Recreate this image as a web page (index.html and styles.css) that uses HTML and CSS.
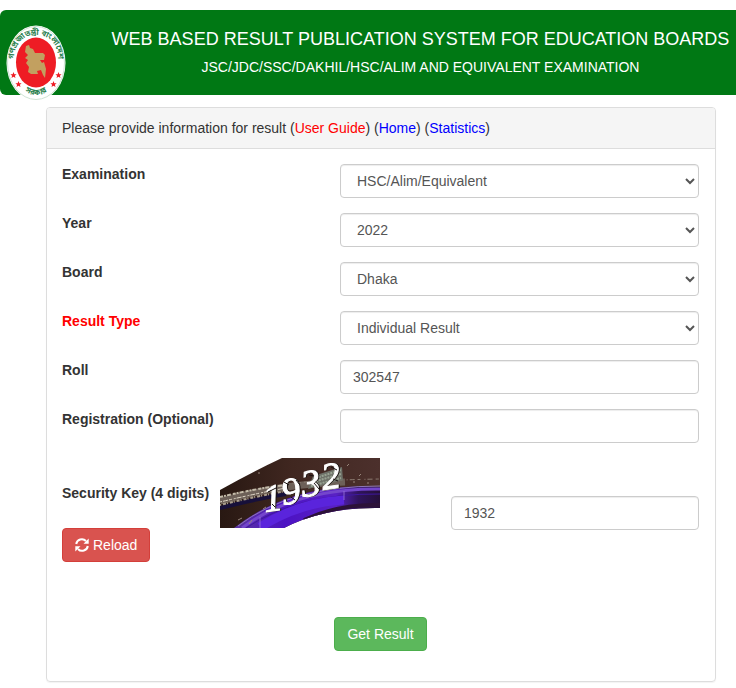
FILE: index.html
```html
<!DOCTYPE html>
<html lang="en">
<head>
    <meta charset="UTF-8">
    <meta name="viewport" content="width=device-width, initial-scale=1.0">
    <title>Web Based Result Publication System for Education Boards</title>
    <link rel="stylesheet" href="styles.css">
</head>
<body>
    <header class="banner">
        <svg class="logo" viewBox="0 0 60 76" role="img" aria-label="Government seal">
            <defs>
                <path id="sealTop" d="M9 45 C4 21 16 10 30 10 C44 10 56 21 51 45"/>
                <path id="sealBottom" d="M12 60 Q30 80 48 60"/>
            </defs>
            <ellipse cx="30" cy="38" rx="29.500" ry="37.500" fill="#fff"/>
            <ellipse cx="30" cy="38" rx="28.500" ry="36.500" fill="none" stroke="#cfe3d4" stroke-width="1"/>
            <ellipse cx="30" cy="37.500" rx="20" ry="25" fill="#ee1c24"/>
            <path d="M20 21 L23 20 L24 23 L27 24 L29 28 L37 28 L39 30 L38 35 L34 35 L36 38 L38 37 L40 44 L39 53 L37 50 L35 45 L31 46 L32 49 L25 49 L22 47 L23 42 L20 38 L22 35 L19 33 L22 30 L19 27 Z" fill="#c2a060"/>
            <g class="seal-text">
                <text text-anchor="middle"><textPath href="#sealTop" startOffset="50%">গণপ্রজাতন্ত্রী বাংলাদেশ</textPath></text>
                <text text-anchor="middle"><textPath href="#sealBottom" startOffset="50%">সরকার</textPath></text>
            </g>
            <g fill="#ee1c24">
                <path id="star" d="M7.500 47 L8.400 49.200 L10.600 49.300 L8.900 50.700 L9.500 53 L7.500 51.700 L5.500 53 L6.100 50.700 L4.400 49.300 L6.600 49.200 Z"/>
                <use href="#star" x="5" y="9"/>
                <use href="#star" x="40" y="9"/>
                <use href="#star" x="45" y="0"/>
            </g>
        </svg>
        <div class="banner-text">
            <h1>WEB BASED RESULT PUBLICATION SYSTEM FOR EDUCATION BOARDS</h1>
            <p>JSC/JDC/SSC/DAKHIL/HSC/ALIM AND EQUIVALENT EXAMINATION</p>
        </div>
    </header>

    <main class="panel">
        <div class="panel-heading">
            Please provide information for result (<a class="guide" href="#">User Guide</a>) (<a href="#">Home</a>) (<a href="#">Statistics</a>)
        </div>
        <form class="panel-body">
            <div class="form-row">
                <label for="exam">Examination</label>
                <select id="exam" class="form-control">
                    <option>HSC/Alim/Equivalent</option>
                </select>
            </div>
            <div class="form-row">
                <label for="year">Year</label>
                <select id="year" class="form-control">
                    <option>2022</option>
                </select>
            </div>
            <div class="form-row">
                <label for="board">Board</label>
                <select id="board" class="form-control">
                    <option>Dhaka</option>
                </select>
            </div>
            <div class="form-row">
                <label for="resultType" class="required">Result Type</label>
                <select id="resultType" class="form-control">
                    <option>Individual Result</option>
                </select>
            </div>
            <div class="form-row">
                <label for="roll">Roll</label>
                <input type="text" id="roll" class="form-control" value="302547">
            </div>
            <div class="form-row">
                <label for="reg">Registration (Optional)</label>
                <input type="text" id="reg" class="form-control">
            </div>
            <div class="form-row captcha-row">
                <div>
                    <div class="captcha-label">
                        <label for="captcha">Security Key (4 digits)</label>
                        <svg class="captcha" viewBox="0 0 160 70" role="img" aria-label="Security key">
                            <defs>
                                <linearGradient id="metal" x1="0" y1="0" x2="1" y2="0">
                                    <stop offset="0" stop-color="#281812"/>
                                    <stop offset=".45" stop-color="#402720"/>
                                    <stop offset="1" stop-color="#4c302c"/>
                                </linearGradient>
                                <linearGradient id="glow" x1="0" y1="0" x2="1" y2="0">
                                    <stop offset="0" stop-color="#5b35a0"/>
                                    <stop offset=".35" stop-color="#4c12c4"/>
                                    <stop offset=".7" stop-color="#5921c4"/>
                                    <stop offset=".85" stop-color="#30145e"/>
                                    <stop offset="1" stop-color="#251038"/>
                                </linearGradient>
                                <clipPath id="ring">
                                    <path d="M0 32 Q32 14 62 0 H160 V50 Q105 49 64 70 H0 Z"/>
                                </clipPath>
                            </defs>
                            <rect width="160" height="70" fill="#fff"/>
                            <g clip-path="url(#ring)" fill="none">
                                <rect width="160" height="70" fill="url(#metal)"/>
                                <path d="M0 50 Q40 40 66 36" stroke="#17103a" stroke-width="4"/>
                                <path d="M0 43 Q38 33 66 29 T125 24" stroke="#6d6058" stroke-width="7"/>
                                <path d="M0 39 Q38 30 66 27" stroke="#c4bba9" stroke-width="2" stroke-dasharray="3 1 2 1 4 2"/>
                                <path d="M0 44 Q38 35 66 30" stroke="#e0d8c8" stroke-width="1" stroke-dasharray="2 1 5 1 3 2"/>
                                <path d="M0 47 Q38 38 66 33" stroke="#a89d8d" stroke-width="2" stroke-dasharray="1 2 3 1"/>
                                <path d="M66 26 Q100 22 160 21" stroke="#8b7a70" stroke-width="1" stroke-dasharray="3 4 1 2 5 3"/>
                                <path d="M93 18 L122 9 L123 22 L88 31 Z" fill="#6e7168"/>
                                <path d="M96 20 L121 12 M93 24 L121 16 M91 28 L121 20" stroke="#98a392" stroke-width="2" stroke-dasharray="2 1"/>
                                <path d="M14 70 Q72 24 160 29 V52 Q105 48 60 74 Z" fill="url(#glow)"/>
                                <path d="M22 70 Q75 30 160 31" stroke="#7446cc" stroke-width="3"/>
                                <path d="M26 70 Q78 35 160 36" stroke="#3f18a0" stroke-width="1"/>
                                <path d="M18 68 Q70 28 160 28" stroke="#8e77b5" stroke-width="1"/>
                                <path d="M40 69 Q80 44 124 42" stroke="#5a24dc" stroke-width="9"/>
                                <path d="M84 62 Q118 46 160 47" stroke="#2c1238" stroke-width="4"/>
                                <path d="M18 62 L22 60 M29 66 L32 62 M43 51 L46 49 M127 8 L129 6 M139 18 L141 16 M147 25 H149 M133 24 H135 M21 20 L23 18 M38 15 H40" stroke="#97857a" stroke-width="1"/>
                                <path d="M40 59 V70 M124 33 V42" stroke="#9776d8" stroke-width="2" opacity=".4"/>
                            </g>
                            <g class="captcha-digits">
                                <g class="digit-shade">
                                    <text x="45" y="54" transform="rotate(-8 45 54)">1</text>
                                    <text x="63" y="47" transform="rotate(-8 63 47)">9</text>
                                    <text x="83" y="39" transform="rotate(-8 83 39)">3</text>
                                    <text x="103" y="32" transform="rotate(-8 103 32)">2</text>
                                </g>
                                <path d="M48 34 L56 30 M52 46 L55 49 M64 24 L69 27 M76 22 L80 27 M71 39 L75 42 M89 17 L94 18 M94 25 L99 31 M111 9 L117 12 M113 21 L118 23" fill="none" stroke="#18110f" stroke-width="1"/>
                            </g>
                        </svg>
                    </div>
                    <button type="button" class="btn btn-danger">
                        <svg class="reload-icon" viewBox="0 0 14 14" aria-hidden="true">
                            <path d="M1.200 6 A5.700 5.700 0 0 1 11 3 M12.800 8 A5.700 5.700 0 0 1 3 11" fill="none" stroke="#fff" stroke-width="2"/>
                            <path d="M13.700 .5 V5.700 H8.500 Z M.3 13.500 V8.300 H5.500 Z" fill="#fff"/>
                        </svg>
                        Reload
                    </button>
                </div>
                <input type="text" id="captcha" class="form-control" value="1932">
            </div>
            <div class="submit-row">
                <button type="submit" class="btn btn-success">Get Result</button>
            </div>
        </form>
    </main>
</body>
</html>
```
FILE: styles.css
```css
* {
    box-sizing: border-box;
}
body {
    margin: 0;
    padding-top: 10px;
    font-family: Arial, "Liberation Sans", sans-serif;
    font-size: 14px;
    line-height: 20px;
    color: #333;
    background-color: #fff;
}
a {
    color: #0000ff;
    text-decoration: none;
}
a.guide {
    color: #ff0000;
}

/* banner */
.banner {
    display: flex;
    height: 85px;
    padding-left: 6px;
    background-color: #007814;
    border-radius: 6px 0 0 6px;
    color: #fff;
}
.logo {
    flex: none;
    width: 60px;
    height: 76px;
    margin-top: 15px;
}
.seal-text {
    font-family: "Noto Sans Bengali", "Noto Sans", sans-serif;
    font-size: 8px;
    font-weight: bold;
    fill: #2c8250;
}
.banner-text {
    flex: 1;
    padding: 19px 0 0 39px;
    text-align: center;
    white-space: nowrap;
}
.banner h1 {
    margin: 0 0 8px;
    font-size: 18px;
    font-weight: normal;
    line-height: 20px;
}
.banner p {
    margin: 0;
}

/* form panel */
.panel {
    margin: 12px 20px 6px 46px;
    border: 1px solid #ddd;
    border-radius: 4px;
    box-shadow: 0 1px 1px rgba(0, 0, 0, .05);
}
.panel-heading {
    padding: 10px 15px;
    background-color: #f5f5f5;
    border-bottom: 1px solid #ddd;
    border-radius: 3px 3px 0 0;
}
.panel-body {
    padding: 15px 16px 30px 15px;
}
.form-row {
    display: grid;
    grid-template-columns: 278px 1fr;
    align-items: start;
    margin-bottom: 15px;
}
label {
    font-weight: bold;
}
label.required {
    color: #ff0000;
}
.form-control {
    width: 100%;
    height: 34px;
    padding: 6px 12px;
    font: inherit;
    color: #555;
    background-color: #fff;
    border: 1px solid #ccc;
    border-radius: 4px;
    box-shadow: inset 0 1px 1px rgba(0, 0, 0, .075);
}
select.form-control {
    padding-right: 0;
}

/* security key */
.captcha-row {
    grid-template-columns: 389px 1fr;
    margin-bottom: 55px;
}
.captcha-row .form-control {
    margin-top: 38px;
}
.captcha-label {
    display: flex;
    align-items: center;
    gap: 11px;
}
.captcha {
    width: 160px;
    height: 70px;
    overflow: visible;
}
.captcha-digits {
    font-family: "Liberation Serif", serif;
    font-size: 38px;
    font-style: italic;
    fill: #fff;
}
.digit-shade {
    stroke: #fff;
    stroke-width: 1px;
    filter: drop-shadow(1px 0 0 #18110f);
}

.btn {
    height: 34px;
    padding: 6px 12px;
    font: inherit;
    color: #fff;
    border: 1px solid;
    border-radius: 4px;
    cursor: pointer;
}
.btn-danger {
    display: flex;
    align-items: center;
    gap: 4px;
    background-color: #d9534f;
    border-color: #d43f3a;
}
.btn-success {
    background-color: #5cb85c;
    border-color: #4cae4c;
}
.reload-icon {
    width: 14px;
    height: 14px;
}
.submit-row {
    text-align: center;
}
```
